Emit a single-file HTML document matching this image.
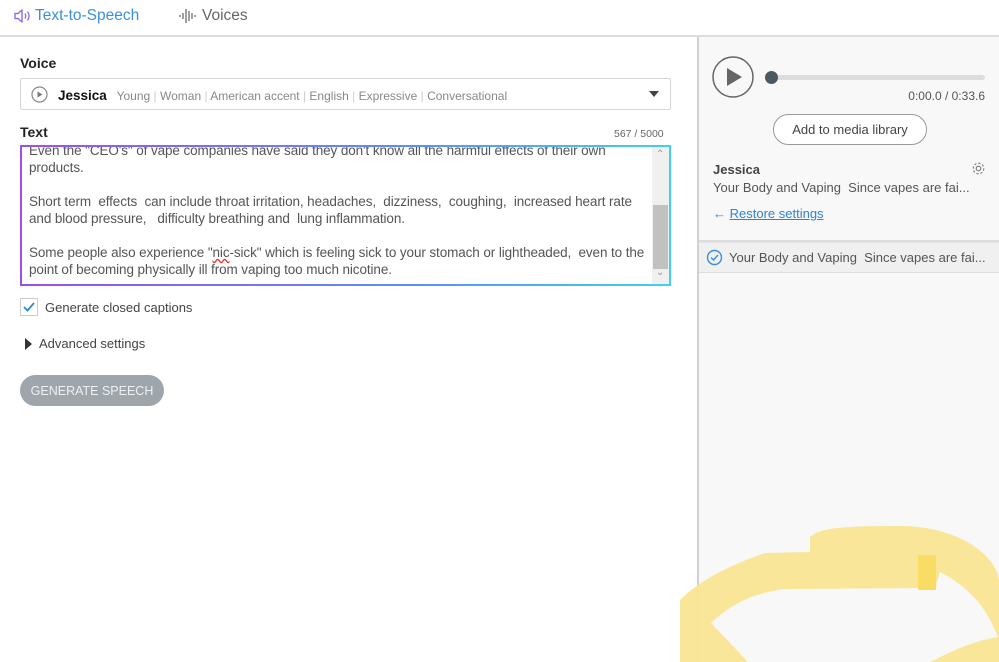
<!DOCTYPE html>
<html><head><meta charset="utf-8"><style>
*{box-sizing:border-box;margin:0;padding:0}
body{width:999px;height:662px;overflow:hidden;background:#fff;font-family:"Liberation Sans",sans-serif;position:relative;color:#333}
.a{position:absolute;white-space:nowrap}
</style></head><body>
<!-- tabs -->
<svg class="a" style="left:13px;top:8px" width="18" height="16" viewBox="0 0 18 16"><path d="M2 5.5h3l4-3.5v12l-4-3.5H2z" fill="none" stroke="#8a6cf0" stroke-width="1.4" stroke-linejoin="round"/><path d="M12 5.5q1.5 2.5 0 5M14.5 3.5q3 4.5 0 9" fill="none" stroke="#8a6cf0" stroke-width="1.3"/></svg>
<div class="a" style="left:35px;top:7px;font-size:15.5px;color:#3b8fe0">Text-to-Speech</div>
<svg class="a" style="left:178px;top:8px" width="20" height="16" viewBox="0 0 20 16"><g stroke="#777" stroke-width="1.4"><path d="M2 7v2M5 5v6M8 1v14M11 3v10M14 5v6M17 7v2"/></g></svg>
<div class="a" style="left:202px;top:7px;font-size:15.5px;color:#666">Voices</div>
<div class="a" style="left:0;top:35px;width:999px;height:2px;background:#ddd"></div>
<!-- left -->
<div class="a" style="left:20px;top:55px;font-size:14px;font-weight:bold;color:#222">Voice</div>
<div class="a" style="left:20px;top:78px;width:651px;height:32px;border:1px solid #d6d6d6;border-radius:2px"></div>
<svg class="a" style="left:31px;top:86px" width="17" height="17" viewBox="0 0 17 17"><circle cx="8.5" cy="8.5" r="7.5" fill="none" stroke="#888" stroke-width="1.2"/><path d="M6.5 5.5v6l5-3z" fill="#777"/></svg>
<div class="a" style="left:58px;top:88px;font-size:12px;color:#888"><b style="color:#111;font-size:13.5px">Jessica</b>&nbsp;&nbsp; Young <span style="color:#ccc">|</span> Woman <span style="color:#ccc">|</span> American accent <span style="color:#ccc">|</span> English <span style="color:#ccc">|</span> Expressive <span style="color:#ccc">|</span> Conversational</div>
<svg class="a" style="left:649px;top:91px" width="10" height="6"><path d="M0 0h10L5 6z" fill="#444"/></svg>
<div class="a" style="left:20px;top:124px;font-size:14px;font-weight:bold;color:#222">Text</div>
<div class="a" style="left:614px;top:128px;font-size:10.5px;color:#666">567 / 5000</div>
<div class="a" style="left:20px;top:145px;width:651px;height:141px;padding:2px;background:linear-gradient(90deg,#9b4ff0,#5b8ff5 60%,#3fd0f5)"><div style="width:100%;height:100%;background:#fff;position:relative;overflow:hidden">
<div class="a" style="left:7px;top:-5px;font-size:13.5px;line-height:17px;color:#555;letter-spacing:-0.1px">Even the "CEO's" of vape companies have said they don't know all the harmful effects of their own<br>products.<br><br>Short term&nbsp; effects&nbsp; can include throat irritation, headaches,&nbsp; dizziness,&nbsp; coughing,&nbsp; increased heart rate<br>and blood pressure,&nbsp;&nbsp; difficulty breathing and&nbsp; lung inflammation.<br><br>Some people also experience "<span style="text-decoration:underline wavy #e33">nic</span>-sick" which is feeling sick to your stomach or lightheaded,&nbsp; even to the<br>point of becoming physically ill from vaping too much nicotine.</div>
<div class="a" style="left:630px;top:0;width:17px;height:137px;background:#f0f0f0"></div>
<div class="a" style="left:631px;top:58px;width:15px;height:64px;background:#c1c1c1"></div>
<div class="a" style="left:634px;top:2px;font-size:10px;color:#999">&#8963;</div>
<div class="a" style="left:634px;top:120px;font-size:10px;color:#999">&#8964;</div>
</div></div>
<div class="a" style="left:20px;top:298px;width:18px;height:18px;border:1px solid #ccc;background:#fff"></div>
<svg class="a" style="left:23px;top:302px" width="12" height="10"><path d="M1 5l3.5 3.5L11 1" fill="none" stroke="#2a8ae0" stroke-width="1.8"/></svg>
<div class="a" style="left:45px;top:300px;font-size:13px;color:#444">Generate closed captions</div>
<svg class="a" style="left:25px;top:338px" width="8" height="12"><path d="M0 0l7 6-7 6z" fill="#333"/></svg>
<div class="a" style="left:39px;top:336px;font-size:13px;color:#444">Advanced settings</div>
<div class="a" style="left:20px;top:375px;width:144px;height:31px;border-radius:16px;background:#9ea5ab;color:#eef0f2;font-size:12.5px;text-align:center;line-height:32px">GENERATE SPEECH</div>
<!-- right -->
<div class="a" style="left:697px;top:37px;width:302px;height:625px;background:#f8f8f8;border-left:2px solid #d0d0d0"></div>
<svg class="a" style="left:711px;top:55px" width="44" height="44"><circle cx="22" cy="22" r="20" fill="none" stroke="#666" stroke-width="1.5"/><path d="M16 13v18l15-9z" fill="#666"/></svg>
<div class="a" style="left:771px;top:75px;width:214px;height:5px;border-radius:3px;background:#ddd"></div>
<div class="a" style="left:765px;top:71px;width:13px;height:13px;border-radius:50%;background:#4b5963"></div>
<div class="a" style="left:880px;top:89px;width:105px;text-align:right;font-size:12px;color:#555">0:00.0 / 0:33.6</div>
<div class="a" style="left:773px;top:114px;width:154px;height:31px;border:1px solid #999;border-radius:16px;background:#fff;font-size:13px;color:#444;text-align:center;line-height:29px">Add to media library</div>
<div class="a" style="left:713px;top:162px;font-size:13px;font-weight:bold;color:#444">Jessica</div>
<svg class="a" style="left:971px;top:161px" width="15" height="15" viewBox="0 0 15 15"><circle cx="7.5" cy="7.5" r="2.3" fill="none" stroke="#777" stroke-width="1.1"/><circle cx="7.5" cy="7.5" r="5.3" fill="none" stroke="#777" stroke-width="1.1" stroke-dasharray="2.2 1.9"/></svg>
<div class="a" style="left:713px;top:180px;font-size:13px;color:#555">Your Body and Vaping&nbsp; Since vapes are fai...</div>
<div class="a" style="left:713px;top:206px;font-size:13px;color:#2b84d8">&#8592; <span style="text-decoration:underline">Restore settings</span></div>
<div class="a" style="left:699px;top:240px;width:300px;height:2px;background:#ddd"></div>
<div class="a" style="left:699px;top:242px;width:300px;height:31px;background:#f0f0f0;border-bottom:1px solid #ddd;border-top:1px solid #e4e4e4"></div>
<svg class="a" style="left:706px;top:249px" width="17" height="17"><circle cx="8.5" cy="8.5" r="7" fill="none" stroke="#3a8fd8" stroke-width="1.4"/><path d="M5 8.5l2.5 2.5 4.5-5" fill="none" stroke="#3a8fd8" stroke-width="1.4"/></svg>
<div class="a" style="left:729px;top:250px;font-size:13px;color:#555">Your Body and Vaping&nbsp; Since vapes are fai...</div>
<svg class="a" style="left:0;top:0" width="999" height="662"><g fill="#fae592" fill-opacity="0.95"><path d="M680 600C700 580 730 565 765 553L810 552L810 537C820 528 840 526 900 526C940 526 970 540 985 555C995 565 999 575 999 580L999 640C990 615 975 590 940 572L935 588L785 589C760 592 735 600 711 623L748 662L680 662Z"/><path d="M930 662C950 652 975 640 999 637L999 662Z"/></g><rect x="918" y="555" width="18" height="35" fill="#f9dc63"/></svg>
</body></html>
